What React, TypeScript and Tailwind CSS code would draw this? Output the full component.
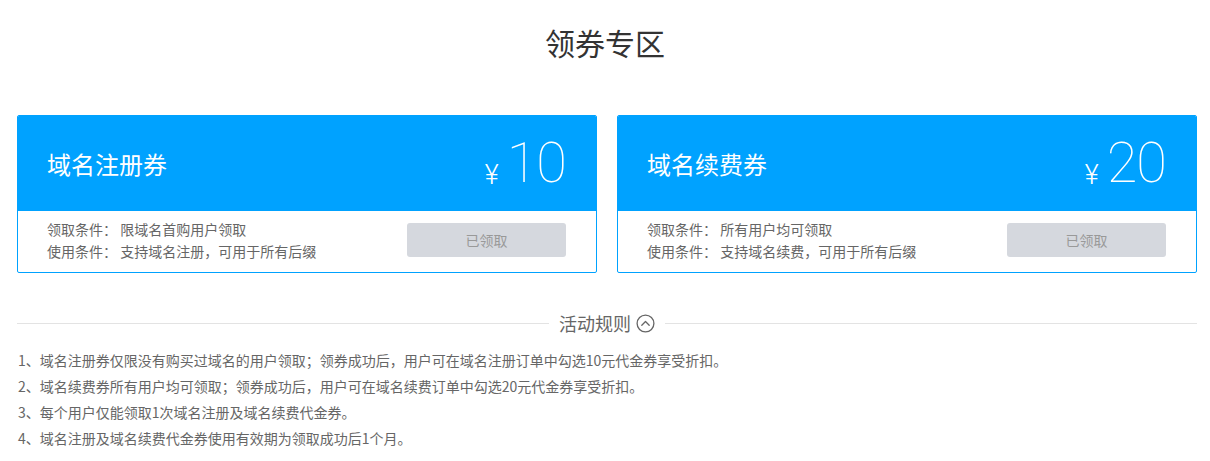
import React from "react";

const font = { fontFamily: '"Microsoft YaHei", "Noto Sans CJK SC", "Noto Sans", sans-serif' };

function CardInner({ title, amount, l1, l2 }: { title: string; amount: string; l1: string; l2: string }) {
  return (
    <>
      <div className="h-[95px] bg-[#00a2ff] flex items-center justify-between pl-[29px] pr-[30px] text-white">
        <div className="text-[24px] leading-none mt-[1px]">{title}</div>
        <div className="flex items-end mb-[2px]">
          <span className="text-[27px] leading-none mb-[2px] mr-[8px] font-light" style={{ fontFamily: 'Roboto, "Noto Sans", sans-serif' }}>¥</span>
          <span className="text-[56px] leading-none font-thin tracking-[-1px]" style={{ fontFamily: 'Roboto, "Noto Sans", sans-serif' }}>{amount}</span>
        </div>
      </div>
      <div className="h-[61px] flex items-center justify-between pl-[29px] pr-[30px] pb-[3px]">
        <div className="text-[14px] text-[#666] leading-[22px]">
          <div>领取条件： {l1}</div>
          <div>使用条件： {l2}</div>
        </div>
        <div className="w-[159px] h-[34px] rounded-[3px] bg-[#d5d8de] text-[#999] text-[14px] flex items-center justify-center">已领取</div>
      </div>
    </>
  );
}

export default function App() {
  return (
    <div className="w-[1210px] h-[461px] bg-white" style={font}>
      <div className="pt-[22px] text-center text-[30px] leading-[40px] text-[#333]">领券专区</div>
      <div className="flex gap-[20px] pl-[17px] pr-[13px] mt-[53px]">
        <div className="flex-1 rounded-[2px] border border-[#00a2ff] bg-white overflow-hidden">
          <CardInner title="域名注册券" amount="10" l1="限域名首购用户领取" l2="支持域名注册，可用于所有后缀" />
        </div>
        <div className="flex-1 rounded-[2px] border border-[#00a2ff] bg-white overflow-hidden">
          <CardInner title="域名续费券" amount="20" l1="所有用户均可领取" l2="支持域名续费，可用于所有后缀" />
        </div>
      </div>
      <div className="flex items-center pl-[17px] pr-[13px] mt-[40px]">
        <div className="flex-1 h-px bg-[#e3e3e3]" />
        <div className="flex items-center px-[10px] text-[18px] text-[#666] leading-none">
          <span>活动规则</span>
          <svg className="ml-[5px] mt-[1px]" width="19" height="19" viewBox="0 0 19 19" fill="none" stroke="#666" strokeWidth="1.3">
            <circle cx="9.5" cy="9.5" r="8.4" />
            <path d="M5.8 11.2 L9.5 7.5 L13.2 11.2" strokeLinecap="round" strokeLinejoin="round" />
          </svg>
        </div>
        <div className="flex-1 h-px bg-[#e3e3e3]" />
      </div>
      <div className="pl-[18px] mt-[14px] text-[14px] text-[#666] leading-[26px]">
        <div>1、域名注册券仅限没有购买过域名的用户领取；领券成功后，用户可在域名注册订单中勾选10元代金券享受折扣。</div>
        <div>2、域名续费券所有用户均可领取；领券成功后，用户可在域名续费订单中勾选20元代金券享受折扣。</div>
        <div>3、每个用户仅能领取1次域名注册及域名续费代金券。</div>
        <div>4、域名注册及域名续费代金券使用有效期为领取成功后1个月。</div>
      </div>
    </div>
  );
}
